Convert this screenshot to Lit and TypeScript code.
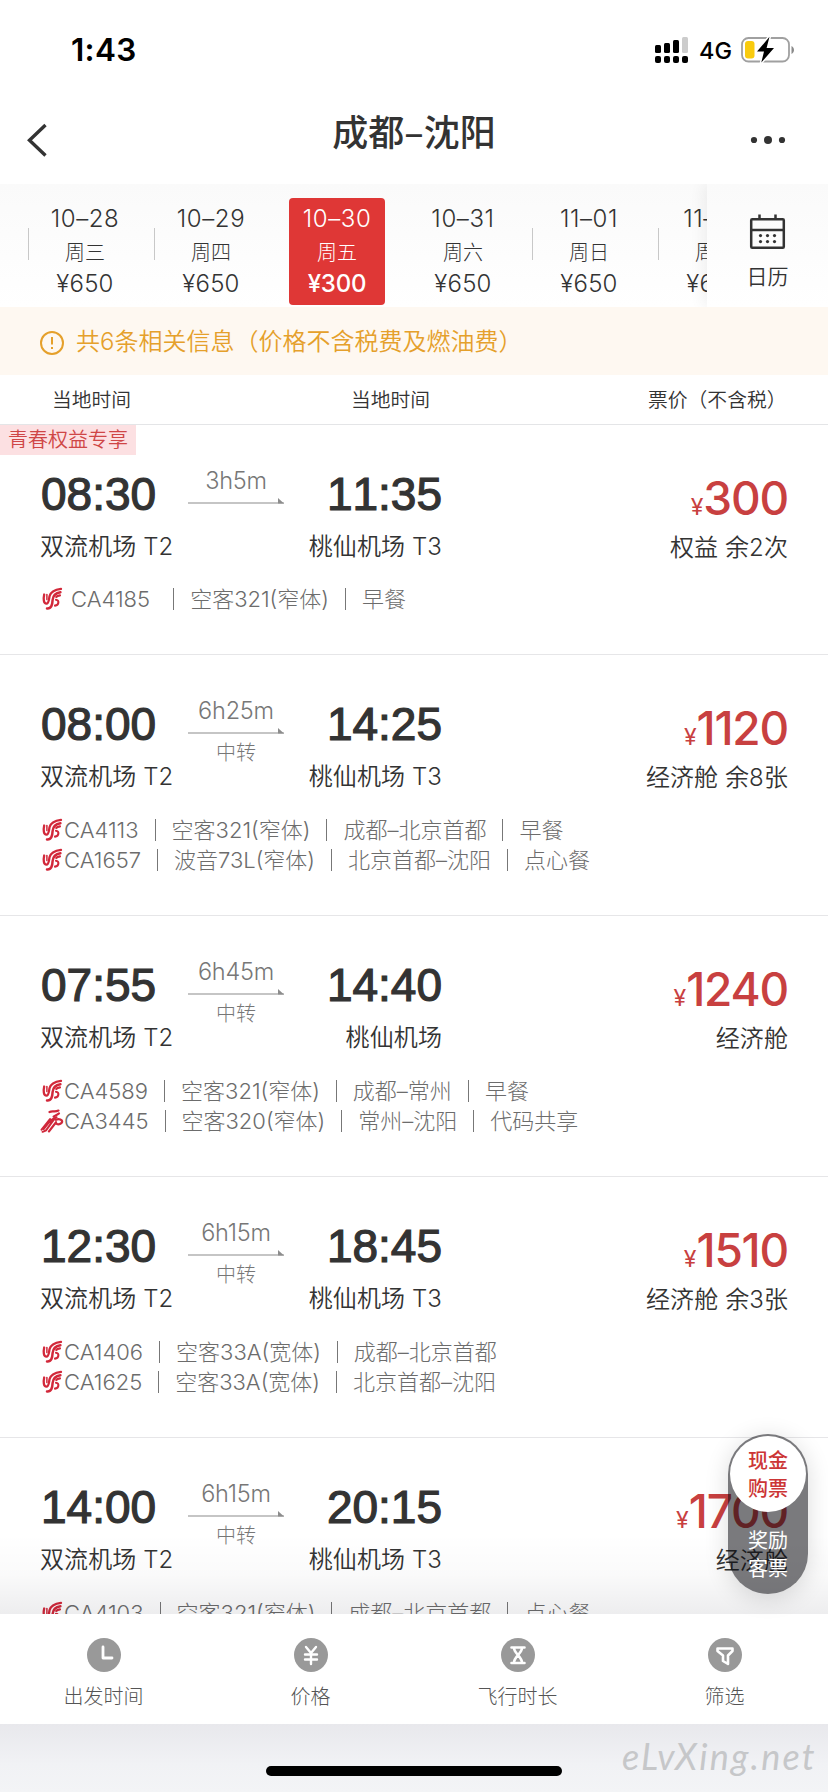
import { LitElement, html, css, svg, nothing } from "lit";
import { customElement, property } from "lit/decorators.js";
import { classMap } from "lit/directives/class-map.js";

interface Leg { logo: "ca" | "zh"; parts: string[]; }
interface Flight {
  dep: string; arr: string; dur: string; transfer: boolean;
  from: string; to: string; price: string; cabin: string;
  tag?: string; legs: Leg[];
}

const DAYS = [
  { date: "10–28", week: "周三", price: "¥650" },
  { date: "10–29", week: "周四", price: "¥650" },
  { date: "10–30", week: "周五", price: "¥300", on: true },
  { date: "10–31", week: "周六", price: "¥650", bare: true },
  { date: "11–01", week: "周日", price: "¥650" },
  { date: "11–02", week: "周一", price: "¥650" },
];

const FLIGHTS: Flight[] = [
  { dep: "08:30", arr: "11:35", dur: "3h5m", transfer: false, from: "双流机场 T2", to: "桃仙机场 T3", price: "300", cabin: "权益 余2次", tag: "青春权益专享",
    legs: [{ logo: "ca", parts: ["CA4185", "空客321(窄体)", "早餐"] }] },
  { dep: "08:00", arr: "14:25", dur: "6h25m", transfer: true, from: "双流机场 T2", to: "桃仙机场 T3", price: "1120", cabin: "经济舱 余8张",
    legs: [{ logo: "ca", parts: ["CA4113", "空客321(窄体)", "成都–北京首都", "早餐"] }, { logo: "ca", parts: ["CA1657", "波音73L(窄体)", "北京首都–沈阳", "点心餐"] }] },
  { dep: "07:55", arr: "14:40", dur: "6h45m", transfer: true, from: "双流机场 T2", to: "桃仙机场", price: "1240", cabin: "经济舱",
    legs: [{ logo: "ca", parts: ["CA4589", "空客321(窄体)", "成都–常州", "早餐"] }, { logo: "zh", parts: ["CA3445", "空客320(窄体)", "常州–沈阳", "代码共享"] }] },
  { dep: "12:30", arr: "18:45", dur: "6h15m", transfer: true, from: "双流机场 T2", to: "桃仙机场 T3", price: "1510", cabin: "经济舱 余3张",
    legs: [{ logo: "ca", parts: ["CA1406", "空客33A(宽体)", "成都–北京首都"] }, { logo: "ca", parts: ["CA1625", "空客33A(宽体)", "北京首都–沈阳"] }] },
  { dep: "14:00", arr: "20:15", dur: "6h15m", transfer: true, from: "双流机场 T2", to: "桃仙机场 T3", price: "1700", cabin: "经济舱",
    legs: [{ logo: "ca", parts: ["CA4103", "空客321(窄体)", "成都–北京首都", "点心餐"] }] },
];

const caLogo = svg`<g fill="none" stroke="#d2283a" stroke-linecap="round">
  <path stroke-width="2.300" d="M4.200 7.500C3.200 12 3.600 16.600 6.400 16.600C9 16.600 8.800 12.500 9.600 9C10.600 5.200 13.600 2.800 21 1.800"/>
  <path stroke-width="1.500" d="M6.900 7.500V12.600"/>
  <path stroke-width="2.500" d="M7 21.400C11.400 21.800 12.400 17.600 12.600 13C13 8.600 15.200 6 20.400 5.200"/>
  <path stroke-width="2.100" d="M15 18.600C19.200 18 19.400 13 16 12.800M16.200 10C17 9 18.200 8.700 20 8.400"/></g>`;

const zhLogo = svg`<g fill="none" stroke="#d0283b" stroke-linecap="round">
  <path stroke-width="2.200" d="M9.500 3C13 1.400 14.500 3.600 18.500 1.600M19 4.400C17 6 15 6.600 13.600 7.600"/>
  <path stroke-width="2" d="M16.600 8.200C12 9.500 10.500 11.500 8.500 14L3.600 20M14 10.400L6 21.400L2.600 22.800M10 10L1.600 20.600"/>
  <path stroke-width="2.300" d="M15.600 10.600C21.600 8.800 24 13 20.400 14.800C18.400 15.800 16.200 15.400 15.800 13.600L9 22.400"/></g>`;

@customElement("flight-card")
export class FlightCard extends LitElement {
  @property({ attribute: false }) flight!: Flight;

  static styles = css`
    :host { display: block; flex: none; border-bottom: 1px solid #e6e6e8; box-sizing: border-box; background: #fff; color: #333; position: relative; padding: 35px 40px 39px 40px; height: 230px; }
    :host([wide]) { height: 261px; }
    .tag { position: absolute; left: 0; top: 0; width: 136px; height: 30px; line-height: 31px; background: #fce0e2; color: #cf4646; font-size: 20px; padding-left: 8px; box-sizing: border-box; font-weight: 350; white-space: nowrap; }
    .top { display: grid; grid-template-columns: 148px 96px 158px 1fr; height: 106px; }
    .time { font: 400 46px/68px "Liberation Sans", sans-serif; letter-spacing: 0; padding-left: 1px; -webkit-text-stroke: 1.200px #333; white-space: nowrap; height: 69px; font-kerning: none; }
    .place { font-size: 24px; line-height: 36px; white-space: nowrap; letter-spacing: .1px; font-weight: 350; }
    .right { display: flex; flex-direction: column; align-items: flex-end; }
    .mid { display: flex; flex-direction: column; align-items: center; color: #777; font-weight: 300; }
    .dur { font-size: 23.500px; line-height: 32px; margin-top: 5px; letter-spacing: -.2px; height: 33px; }
    .line { width: 96px; height: 6px; display: block; }
    .trans { font-size: 20px; line-height: 28px; margin-top: 5px; }
    .price { color: #c84040; font-size: 46px; line-height: 70px; height: 70px; font-weight: 500; letter-spacing: -1.200px; margin-top: 3px; white-space: nowrap; }
    .yen { font-size: 23px; font-weight: 400; letter-spacing: 0; }
    .cabin { margin-top: -3px; }
    .legs { display: flex; flex-direction: column; margin-top: 18px; }
    :host([wide]) .legs { margin-top: 19px; }
    .leg { display: flex; align-items: center; height: 30px; font-size: 22px; line-height: 30px; color: #6c6c6c; font-weight: 300; white-space: nowrap; }
    .logo { width: 24px; height: 24px; flex: none; }
    .spaced .logo { margin-right: 7px; }
    .part { letter-spacing: 0; }
    .bar { width: 1px; height: 22px; background: #777; margin: 0 16px 0 16px; }
    .spaced .bar.first { margin-left: 23px; }
  `;

  render() {
    const f = this.flight;
    return html`
      ${f.tag ? html`<div class="tag">${f.tag}</div>` : nothing}
      <div class="top">
        <div class="left"><div class="time">${f.dep}</div><div class="place">${f.from}</div></div>
        <div class="mid">
          <div class="dur">${f.dur}</div>
          <svg class="line" viewBox="0 0 96 6"><path d="M0 5H96" stroke="#8c8c8c" stroke-width="1.200"/><path d="M90 0L96 5.400H90Z" fill="#8c8c8c"/></svg>
          ${f.transfer ? html`<div class="trans">中转</div>` : nothing}
        </div>
        <div class="right"><div class="time">${f.arr}</div><div class="place">${f.to}</div></div>
        <div class="right"><div class="price"><span class="yen">¥</span>${f.price}</div><div class="place cabin">${f.cabin}</div></div>
      </div>
      <div class="legs">
        ${f.legs.map((l) => html`<div class=${classMap({ leg: true, spaced: !f.transfer })}>
          <svg class="logo" viewBox="0 0 24 24">${l.logo === "ca" ? caLogo : zhLogo}</svg>
          ${l.parts.map((p, i) => html`${i ? html`<span class=${classMap({ bar: true, first: i === 1 })}></span>` : nothing}<span class="part">${p}</span>`)}
        </div>`)}
      </div>`;
  }
}

const TABS = [
  { label: "出发时间", icon: svg`<path d="M16 9V20H25"/>` },
  { label: "价格", icon: svg`<path d="M12 9L17 15L22 9M11 16.500H23M11 21.500H23M17 15.500V26" stroke-width="2.400"/>` },
  { label: "飞行时长", icon: svg`<path d="M10.500 9.500H23.500M10.500 25H23.500M13 10C13 15 21 19 21 24.500M21 10C21 15 13 19 13 24.500" stroke-width="2.600"/>` },
  { label: "筛选", icon: svg`<path d="M9.500 10.500H24.500V13L20 17.500V26L15 23V17.500L9.500 13Z" stroke-width="2.600"/>` },
];

@customElement("app-root")
export class AppRoot extends LitElement {
  static styles = css`
    :host { display: flex; flex-direction: column; width: 828px; height: 1792px; overflow: hidden; background: #fff; color: #333; position: relative; font-family: Inter, "Noto Sans CJK SC", sans-serif; }
    .status { height: 88px; display: flex; align-items: flex-start; flex: none; color: #000; padding: 0 33px 0 71px; }
    .clock { font-size: 31.500px; font-weight: 600; line-height: 38px; margin-top: 31px; flex: 1; letter-spacing: .3px; }
    .signal { width: 34px; height: 27px; margin-top: 37px; }
    .net { font-size: 23.500px; font-weight: 500; line-height: 28px; margin: 37px 10px 0 10px; letter-spacing: 0; width: 32px; }
    .battery { width: 54px; height: 28px; margin-top: 36px; }
    .nav { height: 96px; flex: none; display: grid; grid-template-columns: 60px 1fr 60px; padding: 0 14px; }
    .title { text-align: center; font: 500 36px/52px "Noto Sans CJK SC", sans-serif; margin-top: 16px; display: flex; justify-content: center; }
    .nav svg { width: 60px; height: 40px; margin-top: 32px; overflow: visible; }
    .dates { height: 123px; flex: none; display: flex; background: linear-gradient(#fafafa, #fff); overflow: hidden; }
    .days { width: 679px; padding-left: 28px; display: flex; overflow: hidden; flex: none; }
    .day { width: 126px; flex: none; display: flex; align-items: flex-start; }
    .sep { width: 1px; height: 32px; margin-top: 44px; background: #c8c8c8; }
    .sep.off { background: transparent; }
    .cell { width: 96px; height: 107px; margin: 14px 0 0 8px; display: flex; flex-direction: column; align-items: center; border-radius: 4px; font-size: 24px; font-weight: 300; }
    .cell.on { background: #df3736; color: #fff; }
    .d { line-height: 30px; margin-top: 6px; letter-spacing: .6px; }
    .w { font-size: 20px; line-height: 30px; margin-top: 4px; }
    .p { line-height: 30px; margin-top: 1px; letter-spacing: .2px; font-weight: 350; }
    .on .p { font-weight: 500; letter-spacing: -.2px; }
    .cal { flex: 1; display: flex; flex-direction: column; align-items: center; background: linear-gradient(#fafafa, #fff); box-shadow: -4px 0 14px rgba(0,0,0,.06); z-index: 1; font-size: 21px; font-weight: 350; line-height: 30px; }
    .cal svg { width: 37px; height: 38px; margin: 29px 0 11px; }
    .notice { height: 68px; flex: none; background: #fef8f1; color: #e5a02b; font-size: 24px; display: flex; align-items: center; padding: 0 0 4px 39px; box-sizing: border-box; font-weight: 350; white-space: nowrap; }
    .notice svg { width: 26px; height: 26px; margin: 7px 11px 0 0; }
    .heads { height: 50px; flex: none; box-sizing: border-box; border-bottom: 1px solid #e4e5e7; display: grid; grid-template-columns: 299px 297px 1fr; padding-left: 52px; font-size: 19.800px; font-weight: 350; line-height: 51px; white-space: nowrap; }
    .list { flex: 1; min-height: 0; overflow: hidden; display: flex; flex-direction: column; position: relative; }
    .list::after { content: ""; position: absolute; left: 0; right: 0; bottom: 0; height: 80px; background: linear-gradient(to bottom, rgba(0,0,0,0), rgba(0,0,20,.02) 50%, rgba(0,0,20,.07)); }
    .tabs { height: 110px; flex: none; background: #fff; display: grid; grid-template-columns: repeat(4, 1fr); }
    .tab { display: flex; flex-direction: column; align-items: center; font-size: 20px; font-weight: 300; color: #555; line-height: 30px; }
    .tab svg { width: 34px; height: 34px; margin: 24px 0 10px; }
    .foot { height: 68px; flex: none; background: linear-gradient(#e8e8ec, #f1f2f5 60%, #f3f4f6); display: flex; justify-content: center; }
    .home { width: 296px; height: 10px; border-radius: 5px; background: #000; margin-top: 42px; }
    .mark { position: absolute; left: 622px; top: 1734px; font: italic 400 36px/44px "Lato", cursive; color: #c6c7c9; letter-spacing: 2.200px; white-space: nowrap; }
    .switch { position: absolute; left: 728px; top: 1434px; width: 80px; height: 160px; border-radius: 40px; background: rgba(10,10,14,.54); box-shadow: 0 4px 24px rgba(0,0,0,.14); color: #fff; font-size: 20px; line-height: 28px; text-align: center; font-weight: 400; }
    .knob { width: 76px; height: 76px; margin: 2px; box-sizing: border-box; border-radius: 50%; background: #fff; color: #cc3535; padding-top: 11px; font-weight: 500; }
    .alt { margin-top: 15px; }
  `;

  render() {
    return html`
      <div class="status">
        <span class="clock">1:43</span>
        <svg class="signal" viewBox="0 0 34 27"><g fill="#000"><rect x="0" y="8" width="6" height="8" rx="1.500"/><rect x="9" y="6" width="6" height="10" rx="1.500"/><rect x="18" y="3" width="6" height="13" rx="1.500"/><rect x="27" y="0" width="6" height="16" rx="1.500" fill="#ccc"/><rect x="0" y="19" width="6" height="7" rx="2"/><rect x="9" y="19" width="6" height="7" rx="2"/><rect x="18" y="19" width="6" height="7" rx="2"/><rect x="27" y="19" width="6" height="7" rx="2"/></g></svg>
        <span class="net">4G</span>
        <svg class="battery" viewBox="0 0 54 28"><rect x="1" y="2" width="47" height="23.500" rx="6.500" fill="#fff" stroke="#a0a0a0" stroke-width="1.800"/><path d="M50.500 10V18C53.800 16.500 53.800 11.500 50.500 10Z" fill="#8a8a8a"/><rect x="4" y="5" width="9.500" height="17.500" rx="3" fill="#f9cb0e"/><path d="M28.500 .8L16 15.600H23L20.300 26.600L33 12H25.600Z" fill="#000" stroke="#fff" stroke-width="3" paint-order="stroke" stroke-linejoin="round"/></svg>
      </div>
      <div class="nav">
        <svg viewBox="0 0 60 40"><path d="M31.500 5L15.500 20.200L31.500 35.400" fill="none" stroke="#333" stroke-width="3.400"/></svg>
        <div class="title">成都–沈阳</div>
        <svg viewBox="0 0 60 40"><g fill="#333"><circle cx="0" cy="20" r="3.100"/><circle cx="14" cy="20" r="4"/><circle cx="28" cy="20" r="3.100"/></g></svg>
      </div>
      <div class="dates">
        <div class="days">${DAYS.map((d) => html`<div class="day"><span class=${classMap({ sep: true, off: !!(d.on || d.bare) })}></span><div class=${classMap({ cell: true, on: !!d.on })}><div class="d">${d.date}</div><div class="w">${d.week}</div><div class="p">${d.price}</div></div></div>`)}</div>
        <div class="cal"><svg viewBox="0 0 37 38"><g fill="none" stroke="#333" stroke-width="2.500"><rect x="2.200" y="6.200" width="32.600" height="28.600" rx="1"/><path d="M2 17H35M10.500 1.500V6M26.500 1.500V6"/></g><g fill="#333"><circle cx="11.500" cy="22.600" r="1.600"/><circle cx="18.500" cy="22.600" r="1.600"/><circle cx="25.500" cy="22.600" r="1.600"/><circle cx="11.500" cy="28.600" r="1.600"/><circle cx="18.500" cy="28.600" r="1.600"/><circle cx="25.500" cy="28.600" r="1.600"/></g></svg><span>日历</span></div>
      </div>
      <div class="notice"><svg viewBox="0 0 26 26"><circle cx="13" cy="13" r="11" fill="none" stroke="#e5a02b" stroke-width="2"/><path d="M13 7V14.500M13 17V19" stroke="#e5a02b" stroke-width="2"/></svg>共6条相关信息（价格不含税费及燃油费）</div>
      <div class="heads"><span>当地时间</span><span>当地时间</span><span>票价（不含税）</span></div>
      <div class="list">${FLIGHTS.map((f) => html`<flight-card .flight=${f} ?wide=${f.transfer}></flight-card>`)}</div>
      <div class="tabs">${TABS.map((t) => html`<div class="tab"><svg viewBox="0 0 34 34"><circle cx="17" cy="17" r="17" fill="#999"/><g fill="none" stroke="#fff" stroke-width="2.800" stroke-linecap="round" stroke-linejoin="round">${t.icon}</g></svg><span>${t.label}</span></div>`)}</div>
      <div class="foot"><div class="home"></div></div>
      <div class="mark">eLvXing.net</div>
      <div class="switch"><div class="knob">现金<br>购票</div><div class="alt">奖励<br>客票</div></div>`;
  }
}
